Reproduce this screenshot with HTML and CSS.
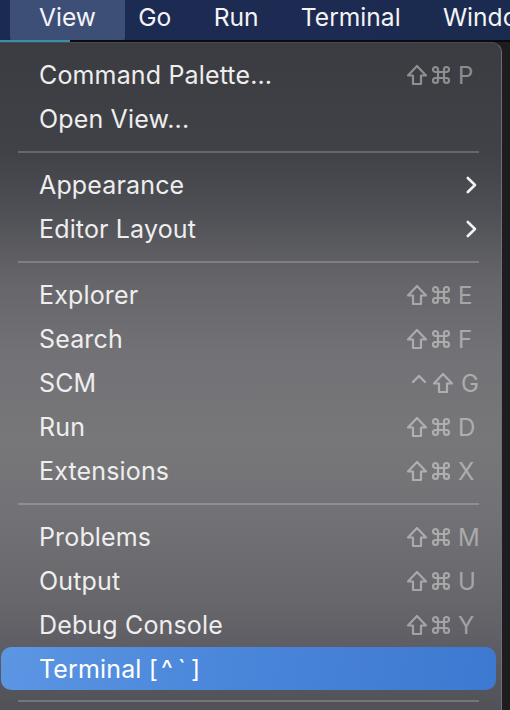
FILE: index.html
```html
<!DOCTYPE html>
<html>
<head>
<meta charset="utf-8">
<link rel="stylesheet" href="styles.css">
</head>
<body>
<div class="menubar">
  <span class="mb-item active">View</span>
  <span class="mb-item">Go</span>
  <span class="mb-item">Run</span>
  <span class="mb-item">Terminal</span>
  <span class="mb-item">Window</span>
</div>
<div class="underline"></div>
<div class="menu">
  <div class="row"><span class="label">Command Palette...</span><span class="sc"><span class="mods"><svg class="shift" viewBox="0 0 22 22" width="22" height="22"><path d="M11 2 L20 11.5 L15 11.5 L15 20 L7 20 L7 11.5 L2 11.5 Z"/></svg><svg class="cmd" viewBox="0 0 20 20" width="20" height="20"><path d="M7 7 V4.5 A2.5 2.5 0 1 0 4.5 7 H15.5 A2.5 2.5 0 1 0 13 4.5 V15.5 A2.5 2.5 0 1 0 15.5 13 H4.5 A2.5 2.5 0 1 0 7 15.5 Z"/></svg></span><span class="key">P</span></span></div>
  <div class="row"><span class="label">Open View...</span></div>
  <div class="sep"></div>
  <div class="row"><span class="label">Appearance</span><svg class="chev" viewBox="0 0 12 18" width="12" height="18"><path d="M2.8 2 L10 9 L2.8 16"/></svg></div>
  <div class="row"><span class="label">Editor Layout</span><svg class="chev" viewBox="0 0 12 18" width="12" height="18"><path d="M2.8 2 L10 9 L2.8 16"/></svg></div>
  <div class="sep"></div>
  <div class="row"><span class="label">Explorer</span><span class="sc"><span class="mods"><svg class="shift" viewBox="0 0 22 22" width="22" height="22"><path d="M11 2 L20 11.5 L15 11.5 L15 20 L7 20 L7 11.5 L2 11.5 Z"/></svg><svg class="cmd" viewBox="0 0 20 20" width="20" height="20"><path d="M7 7 V4.5 A2.5 2.5 0 1 0 4.5 7 H15.5 A2.5 2.5 0 1 0 13 4.5 V15.5 A2.5 2.5 0 1 0 15.5 13 H4.5 A2.5 2.5 0 1 0 7 15.5 Z"/></svg></span><span class="key">E</span></span></div>
  <div class="row"><span class="label">Search</span><span class="sc"><span class="mods"><svg class="shift" viewBox="0 0 22 22" width="22" height="22"><path d="M11 2 L20 11.5 L15 11.5 L15 20 L7 20 L7 11.5 L2 11.5 Z"/></svg><svg class="cmd" viewBox="0 0 20 20" width="20" height="20"><path d="M7 7 V4.5 A2.5 2.5 0 1 0 4.5 7 H15.5 A2.5 2.5 0 1 0 13 4.5 V15.5 A2.5 2.5 0 1 0 15.5 13 H4.5 A2.5 2.5 0 1 0 7 15.5 Z"/></svg></span><span class="key">F</span></span></div>
  <div class="row"><span class="label">SCM</span><span class="sc"><span class="mods mods-ctrl"><svg class="ctrl" viewBox="0 0 16 22" width="16" height="22"><path d="M2 10 L8 4 L14 10"/></svg><svg class="shift" viewBox="0 0 22 22" width="22" height="22"><path d="M11 2 L20 11.5 L15 11.5 L15 20 L7 20 L7 11.5 L2 11.5 Z"/></svg></span><span class="key">G</span></span></div>
  <div class="row"><span class="label">Run</span><span class="sc"><span class="mods"><svg class="shift" viewBox="0 0 22 22" width="22" height="22"><path d="M11 2 L20 11.5 L15 11.5 L15 20 L7 20 L7 11.5 L2 11.5 Z"/></svg><svg class="cmd" viewBox="0 0 20 20" width="20" height="20"><path d="M7 7 V4.5 A2.5 2.5 0 1 0 4.5 7 H15.5 A2.5 2.5 0 1 0 13 4.5 V15.5 A2.5 2.5 0 1 0 15.5 13 H4.5 A2.5 2.5 0 1 0 7 15.5 Z"/></svg></span><span class="key">D</span></span></div>
  <div class="row"><span class="label">Extensions</span><span class="sc"><span class="mods"><svg class="shift" viewBox="0 0 22 22" width="22" height="22"><path d="M11 2 L20 11.5 L15 11.5 L15 20 L7 20 L7 11.5 L2 11.5 Z"/></svg><svg class="cmd" viewBox="0 0 20 20" width="20" height="20"><path d="M7 7 V4.5 A2.5 2.5 0 1 0 4.5 7 H15.5 A2.5 2.5 0 1 0 13 4.5 V15.5 A2.5 2.5 0 1 0 15.5 13 H4.5 A2.5 2.5 0 1 0 7 15.5 Z"/></svg></span><span class="key">X</span></span></div>
  <div class="sep"></div>
  <div class="row"><span class="label">Problems</span><span class="sc"><span class="mods"><svg class="shift" viewBox="0 0 22 22" width="22" height="22"><path d="M11 2 L20 11.5 L15 11.5 L15 20 L7 20 L7 11.5 L2 11.5 Z"/></svg><svg class="cmd" viewBox="0 0 20 20" width="20" height="20"><path d="M7 7 V4.5 A2.5 2.5 0 1 0 4.5 7 H15.5 A2.5 2.5 0 1 0 13 4.5 V15.5 A2.5 2.5 0 1 0 15.5 13 H4.5 A2.5 2.5 0 1 0 7 15.5 Z"/></svg></span><span class="key">M</span></span></div>
  <div class="row"><span class="label">Output</span><span class="sc"><span class="mods"><svg class="shift" viewBox="0 0 22 22" width="22" height="22"><path d="M11 2 L20 11.5 L15 11.5 L15 20 L7 20 L7 11.5 L2 11.5 Z"/></svg><svg class="cmd" viewBox="0 0 20 20" width="20" height="20"><path d="M7 7 V4.5 A2.5 2.5 0 1 0 4.5 7 H15.5 A2.5 2.5 0 1 0 13 4.5 V15.5 A2.5 2.5 0 1 0 15.5 13 H4.5 A2.5 2.5 0 1 0 7 15.5 Z"/></svg></span><span class="key">U</span></span></div>
  <div class="row"><span class="label">Debug Console</span><span class="sc"><span class="mods"><svg class="shift" viewBox="0 0 22 22" width="22" height="22"><path d="M11 2 L20 11.5 L15 11.5 L15 20 L7 20 L7 11.5 L2 11.5 Z"/></svg><svg class="cmd" viewBox="0 0 20 20" width="20" height="20"><path d="M7 7 V4.5 A2.5 2.5 0 1 0 4.5 7 H15.5 A2.5 2.5 0 1 0 13 4.5 V15.5 A2.5 2.5 0 1 0 15.5 13 H4.5 A2.5 2.5 0 1 0 7 15.5 Z"/></svg></span><span class="key">Y</span></span></div>
  <div class="row selected"><span class="label">Terminal [<span class="combo">^`</span>]</span></div>
  <div class="sep"></div>
</div>
</body>
</html>
```

FILE: styles.css
```css
html, body {
  margin: 0;
  padding: 0;
}
body {
  width: 510px;
  height: 710px;
  overflow: hidden;
  background: #1d1d1f;
  font-family: Inter, "Noto Sans", sans-serif;
  color: #ececec;
}
.menubar {
  height: 40px;
  display: flex;
  align-items: center;
  padding-left: 39px;
  gap: 42.3px;
  background: linear-gradient(90deg, #1a2a50 0%, #1d2b52 50%, #1b2a4f 100%);
  white-space: nowrap;
  overflow: hidden;
  padding-bottom: 6px;
  box-sizing: border-box;
}
.mb-item {
  position: relative;
  font-size: 24.6px;
  color: #f4f4f6;
  z-index: 0;
  flex-shrink: 0;
}
.mb-item.active::before {
  content: "";
  position: absolute;
  left: -29px;
  right: -29px;
  top: -12px;
  bottom: -11px;
  background: #3d4e77;
  border-radius: 0 0 6px 6px;
  z-index: -1;
}
.underline {
  height: 2px;
  background: linear-gradient(90deg, #3a8fa8 0px, #3a8fa8 70px, #0b0b0d 70px);
}
.menu {
  width: 502px;
  box-sizing: border-box;
  padding: 10px 5px 0 1px;
  border-right: 1px solid #707074;
  border-top: 1px solid #4a4a4e;
  border-top-right-radius: 10px;
  background: linear-gradient(180deg, #3b3c41 0px, #414247 110px, #4f5055 170px, #66666a 240px, #727276 310px, #77777a 400px, #727276 470px, #66666b 560px, #56565d 640px, #4b4b53 700px);
  height: 668px;
}
.row {
  height: 44px;
  display: flex;
  align-items: center;
  padding: 0 19px 0 38px;
  font-size: 25px;
  letter-spacing: 0.15px;
}
.label {
  flex: 1;
  color: #eeeeee;
}
.combo {
  letter-spacing: 5px;
  padding-left: 3px;
}
.sc {
  display: flex;
  align-items: center;
  color: rgba(255, 255, 255, 0.42);
  font-size: 24px;
}
.mods {
  display: flex;
  align-items: center;
  justify-content: flex-end;
  gap: 3px;
  width: 60px;
}
.mods-ctrl {
  margin-right: -3px;
  gap: 5px;
}
.mods svg {
  display: block;
  fill: none;
  stroke: rgba(255, 255, 255, 0.42);
  stroke-width: 2.2;
  stroke-linejoin: round;
}
.mods .ctrl {
  stroke-width: 2.4;
  stroke-linecap: round;
}
.key {
  width: 19px;
  text-align: left;
  padding-left: 7px;
}
.mods-ctrl + .key {
  padding-left: 10px;
  width: 16px;
}
.chev {
  display: block;
  fill: none;
  stroke: #f2f2f2;
  stroke-width: 2.6;
  stroke-linecap: round;
  stroke-linejoin: round;
}
.sep {
  height: 2px;
  margin: 10px 17px;
  background: rgba(255, 255, 255, 0.2);
}
.row.selected {
  background: linear-gradient(100deg, #5c96e3 0%, #4a86da 45%, #3e79d1 100%);
  border-radius: 10px;
  height: 43px;
  margin-bottom: 1px;
}
.row.selected .label {
  color: #ffffff;
}
```
